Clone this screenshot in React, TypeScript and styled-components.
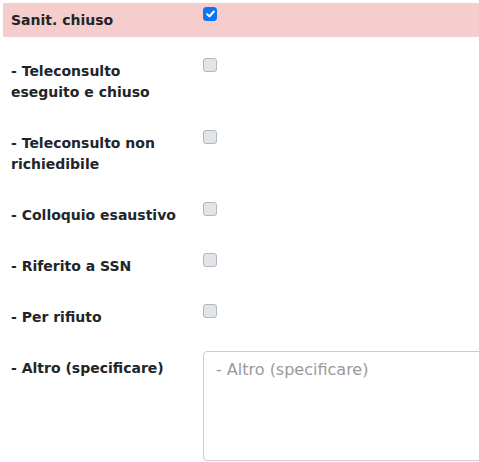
import React from "react";
import styled, { createGlobalStyle } from "styled-components";

const Global = createGlobalStyle`
  html, body { margin: 0; padding: 0; background: #fff; overflow: hidden; }
  body { font-family: "DejaVu Sans", Verdana, sans-serif; color: #212529; }
  * { box-sizing: border-box; }
`;

const Form = styled.div`
  width: 500px;
  padding: 3px 0 0 3px;
  display: flex;
  flex-direction: column;
  gap: 17px;
`;

const Row = styled.div<{ $highlight?: boolean }>`
  display: grid;
  grid-template-columns: 200px 1fr;
  background: ${(p) => (p.$highlight ? "#f5cdcd" : "transparent")};
`;

const Label = styled.label`
  font-size: 14px;
  font-weight: bold;
  line-height: 21px;
  padding: 7px 15px 6px 8px;
  color: #212529;
`;

const Control = styled.div`
  display: flex;
  align-items: flex-start;
`;

const Box = styled.span<{ $checked?: boolean }>`
  width: 14px;
  height: 14px;
  margin-top: 4px;
  border-radius: 3px;
  border: 1px solid ${(p) => (p.$checked ? "#0b76f5" : "#b3b7bb")};
  background: ${(p) => (p.$checked ? "#0b76f5" : "#e2e5e8")};
  display: flex;
  align-items: center;
  justify-content: center;
`;

const TextArea = styled.textarea`
  width: 100%;
  height: 110px;
  border: 1px solid #ccc;
  border-radius: 4px;
  padding: 6px 12px;
  font-family: "DejaVu Sans", Verdana, sans-serif;
  font-size: 16px;
  line-height: 24px;
  color: #495057;
  resize: none;
  &::placeholder { color: #9a9a9a; }
`;

const Check = ({ checked }: { checked?: boolean }) => (
  <Box $checked={checked}>
    {checked && (
      <svg width="9" height="8" viewBox="0 0 9 8">
        <path d="M1.2 4.2 L3.5 6.3 L7.8 1.5" stroke="#fff" strokeWidth="2" fill="none" strokeLinecap="round" strokeLinejoin="round" />
      </svg>
    )}
  </Box>
);

const items = [
  "- Teleconsulto eseguito e chiuso",
  "- Teleconsulto non richiedibile",
  "- Colloquio esaustivo",
  "- Riferito a SSN",
  "- Per rifiuto",
];

export default function App() {
  return (
    <>
      <Global />
      <Form>
        <Row $highlight>
          <Label>Sanit. chiuso</Label>
          <Control>
            <Check checked />
          </Control>
        </Row>
        {items.map((t) => (
          <Row key={t}>
            <Label>{t}</Label>
            <Control>
              <Check />
            </Control>
          </Row>
        ))}
        <Row>
          <Label>- Altro (specificare)</Label>
          <Control>
            <TextArea placeholder="- Altro (specificare)" />
          </Control>
        </Row>
      </Form>
    </>
  );
}
